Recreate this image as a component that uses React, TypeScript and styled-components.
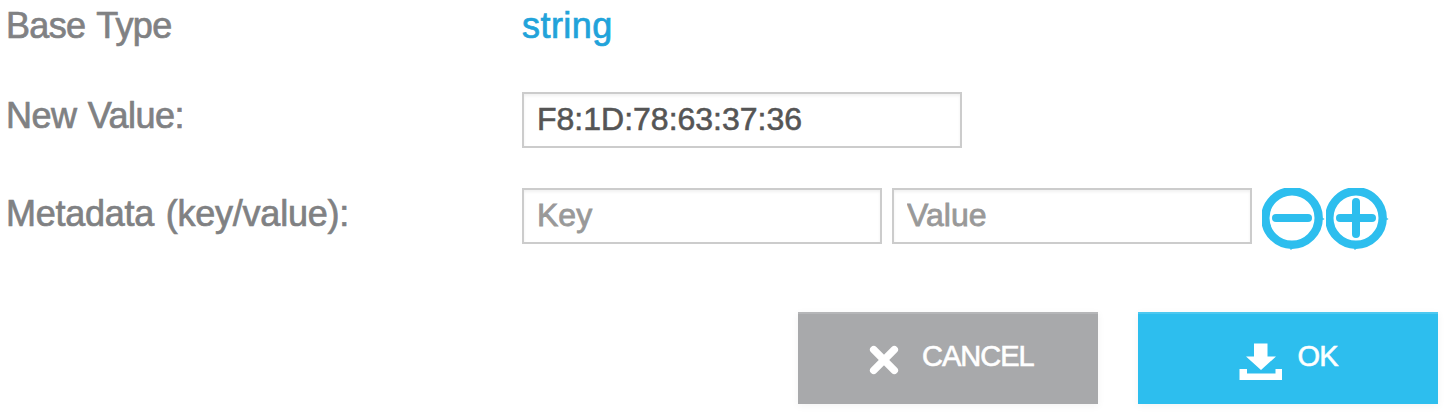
import React from 'react';
import styled, { createGlobalStyle } from 'styled-components';

const GlobalStyle = createGlobalStyle`
  * { box-sizing: border-box; }
  body {
    margin: 0;
    background: #fff;
    overflow: hidden;
    font-family: "Liberation Sans", Arial, sans-serif;
  }
`;

const Form = styled.form`
  display: flex;
  flex-direction: column;
  width: 1448px;
  height: 414px;
`;

const Row = styled.div<{ $height: number }>`
  display: grid;
  grid-template-columns: 516px 1fr;
  align-items: start;
  height: ${(p) => p.$height}px;
  padding-left: 6px;
`;

const Label = styled.label<{ $line?: number; $tracking: number }>`
  font-size: 36px;
  line-height: ${(p) => p.$line ?? 51}px;
  letter-spacing: ${(p) => p.$tracking}px;
  word-spacing: 2px;
  color: #808183;
  -webkit-text-stroke: 0.7px #808183;
  white-space: nowrap;
`;

const TypeName = styled.span`
  font-size: 36px;
  line-height: 51px;
  letter-spacing: 0.45px;
  color: #21a3da;
  -webkit-text-stroke: 0.7px #21a3da;
`;

const Fields = styled.div`
  display: flex;
  align-items: flex-start;
`;

const Input = styled.input<{ $width: number }>`
  width: ${(p) => p.$width}px;
  height: 56px;
  margin: 0 10px 0 0;
  padding: 0 13px 2px;
  border: 2px solid #ccc;
  border-radius: 0;
  outline: none;
  background: #fff;
  box-shadow: inset 0 2px 3px rgba(0, 0, 0, 0.06);
  font: 32px "Liberation Sans", Arial, sans-serif;
  color: #555;
  -webkit-text-stroke: 0.6px #555;
  &::placeholder {
    color: #999;
    opacity: 1;
    -webkit-text-stroke: 0.8px #999;
  }
`;

const IconButton = styled.button`
  width: 64px;
  height: 64px;
  padding: 0;
  border: 0;
  background: none;
  svg { display: block; }
`;

const Actions = styled.div`
  display: flex;
  justify-content: flex-end;
  gap: 40px;
  padding-right: 10px;
`;

const Button = styled.button<{ $bg: string; $edge: string; $inset: number; $gap: number }>`
  display: flex;
  align-items: flex-start;
  gap: ${(p) => p.$gap}px;
  width: 300px;
  height: 92px;
  padding: 26px 0 0 ${(p) => p.$inset}px;
  border: 0;
  border-top: 2px solid ${(p) => p.$edge};
  background: ${(p) => p.$bg};
  box-shadow: 0 2px 8px rgba(0, 0, 0, 0.05);
  color: #fff;
  font: 29px/33px "Liberation Sans", Arial, sans-serif;
  -webkit-text-stroke: 0.6px #fff;
  svg { display: block; flex: none; }
`;

const Caption = styled.span<{ $tracking: number }>`
  letter-spacing: ${(p) => p.$tracking}px;
`;

const CircleIcon = ({ plus = false }: { plus?: boolean }) => (
  <svg width="64" height="64" viewBox="0 0 64 64" fill="none" stroke="#2dbeee" strokeWidth="8" strokeLinecap="round">
    <circle cx="30" cy="30" r="26.7" strokeWidth="8.4" />
    <path d="M14 30H46" />
    {plus && <path d="M30 14V46" />}
    <path d="M29 60V61M60.500 31H61.300" strokeWidth="2" opacity="0.7" />
  </svg>
);

export default function App() {
  return (
    <>
      <GlobalStyle />
      <Form onSubmit={(e) => e.preventDefault()}>
        <Row $height={92}>
          <Label as="span" $tracking={-0.65}>Base Type</Label>
          <TypeName>string</TypeName>
        </Row>
        <Row $height={96}>
          <Label htmlFor="new-value" $line={47} $tracking={-0.55}>New Value:</Label>
          <Input id="new-value" $width={440} defaultValue="F8:1D:78:63:37:36" />
        </Row>
        <Row $height={124}>
          <Label htmlFor="meta-key" $tracking={-0.25}>Metadata (key/value):</Label>
          <Fields>
            <Input id="meta-key" $width={360} placeholder="Key" />
            <Input $width={360} placeholder="Value" />
            <IconButton type="button" aria-label="Remove"><CircleIcon /></IconButton>
            <IconButton type="button" aria-label="Add"><CircleIcon plus /></IconButton>
          </Fields>
        </Row>
        <Actions>
          <Button type="button" $bg="#a8a9ab" $edge="#b5b6b8" $inset={70} $gap={22}>
            <svg width="32" height="40" viewBox="0 0 32 40" stroke="#fff">
              <path d="M5.700 9.700L26.300 30.300M26.300 9.700L5.700 30.300" strokeWidth="7.500" strokeLinecap="round" />
            </svg>
            <Caption $tracking={-1}>CANCEL</Caption>
          </Button>
          <Button type="submit" $bg="#2dbeee" $edge="#4cc8f0" $inset={100} $gap={15.5}>
            <svg width="44" height="40" viewBox="0 0 44 40" fill="#fff">
              <path d="M16 3.500H29.500V16.500H38L23 30L8 16.500H16Z" />
              <path d="M1.500 29H9V33.500H37.500V29H44V40H1.500Z" />
            </svg>
            <Caption $tracking={-0.8}>OK</Caption>
          </Button>
        </Actions>
      </Form>
    </>
  );
}
